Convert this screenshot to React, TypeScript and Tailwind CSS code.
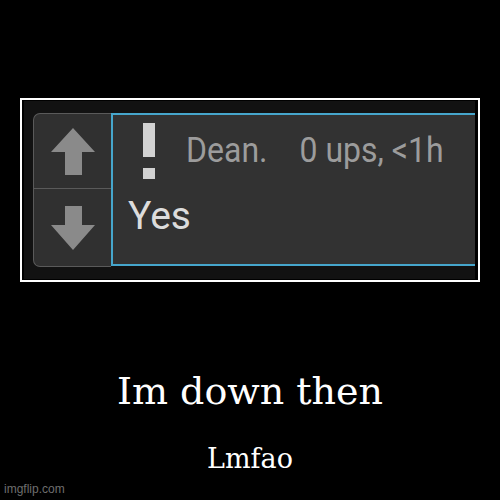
import React from "react";

const ArrowUp = () => (
  <svg width="44" height="47" viewBox="0 0 44 47">
    <polygon points="22,0 44,24 31,24 31,47 14,47 14,24 0,24" fill="#8a8a8a" />
  </svg>
);

const ArrowDown = () => (
  <svg width="44" height="44" viewBox="0 0 44 44">
    <polygon points="14,0 31,0 31,19 44,19 22,44 0,19 14,19" fill="#8a8a8a" />
  </svg>
);

const App = () => {
  return (
    <div className="w-[500px] h-[500px] bg-black flex flex-col items-center pt-[98px] relative overflow-hidden">
      {/* poster frame */}
      <div className="w-[460px] h-[184px] border-2 border-white bg-black pl-[2px] pr-[3px] py-[1px]">
        <div className="w-full h-full bg-[#121212] flex pl-[9px] pt-[12px] pb-[12px] overflow-hidden">
          <div className="w-[78px] h-[154px] flex flex-col rounded-l-[7px] border-[1.5px] border-r-0 border-[#5a5a5a] bg-[#303030]">
            <div className="h-[75px] flex items-center justify-center border-b-[1.5px] border-[#5a5a5a]">
              <ArrowUp />
            </div>
            <div className="flex-1 flex items-center justify-center">
              <ArrowDown />
            </div>
          </div>
          <div className="flex-1 h-[153px] bg-[#323232] border-2 border-r-0 border-[#46a6cc] flex flex-col font-['Roboto',sans-serif]">
            <div className="flex items-start pl-[30px] pt-[8px]">
              <div className="flex flex-col w-[12px]">
                <div className="h-[34px] bg-[#d2d2d2]" />
                <div className="h-[11px] mt-[11px] bg-[#d2d2d2]" />
              </div>
              <div className="ml-[31px] mt-[9px] text-[32px] leading-none text-[#9c9c9c] scale-y-110 origin-top flex gap-[32px]">
                <span>Dean.</span>
                <span>0 ups, &lt;1h</span>
              </div>
            </div>
            <div className="pl-[15px] mt-[18px] text-[39px] leading-none text-[#dcdcdc]">Yes</div>
          </div>
        </div>
      </div>

      <div className="mt-[90px] text-[38px] leading-none text-white font-['DejaVu_Serif',serif]">
        Im down then
      </div>
      <div className="mt-[35px] text-[27px] leading-none text-white font-['DejaVu_Serif',serif]">
        Lmfao
      </div>

      <div className="absolute left-[4px] bottom-[2px] text-[12px] text-[#6e6e6e] font-['Liberation_Sans',sans-serif]">
        imgflip.com
      </div>
    </div>
  );
};

export default App;
